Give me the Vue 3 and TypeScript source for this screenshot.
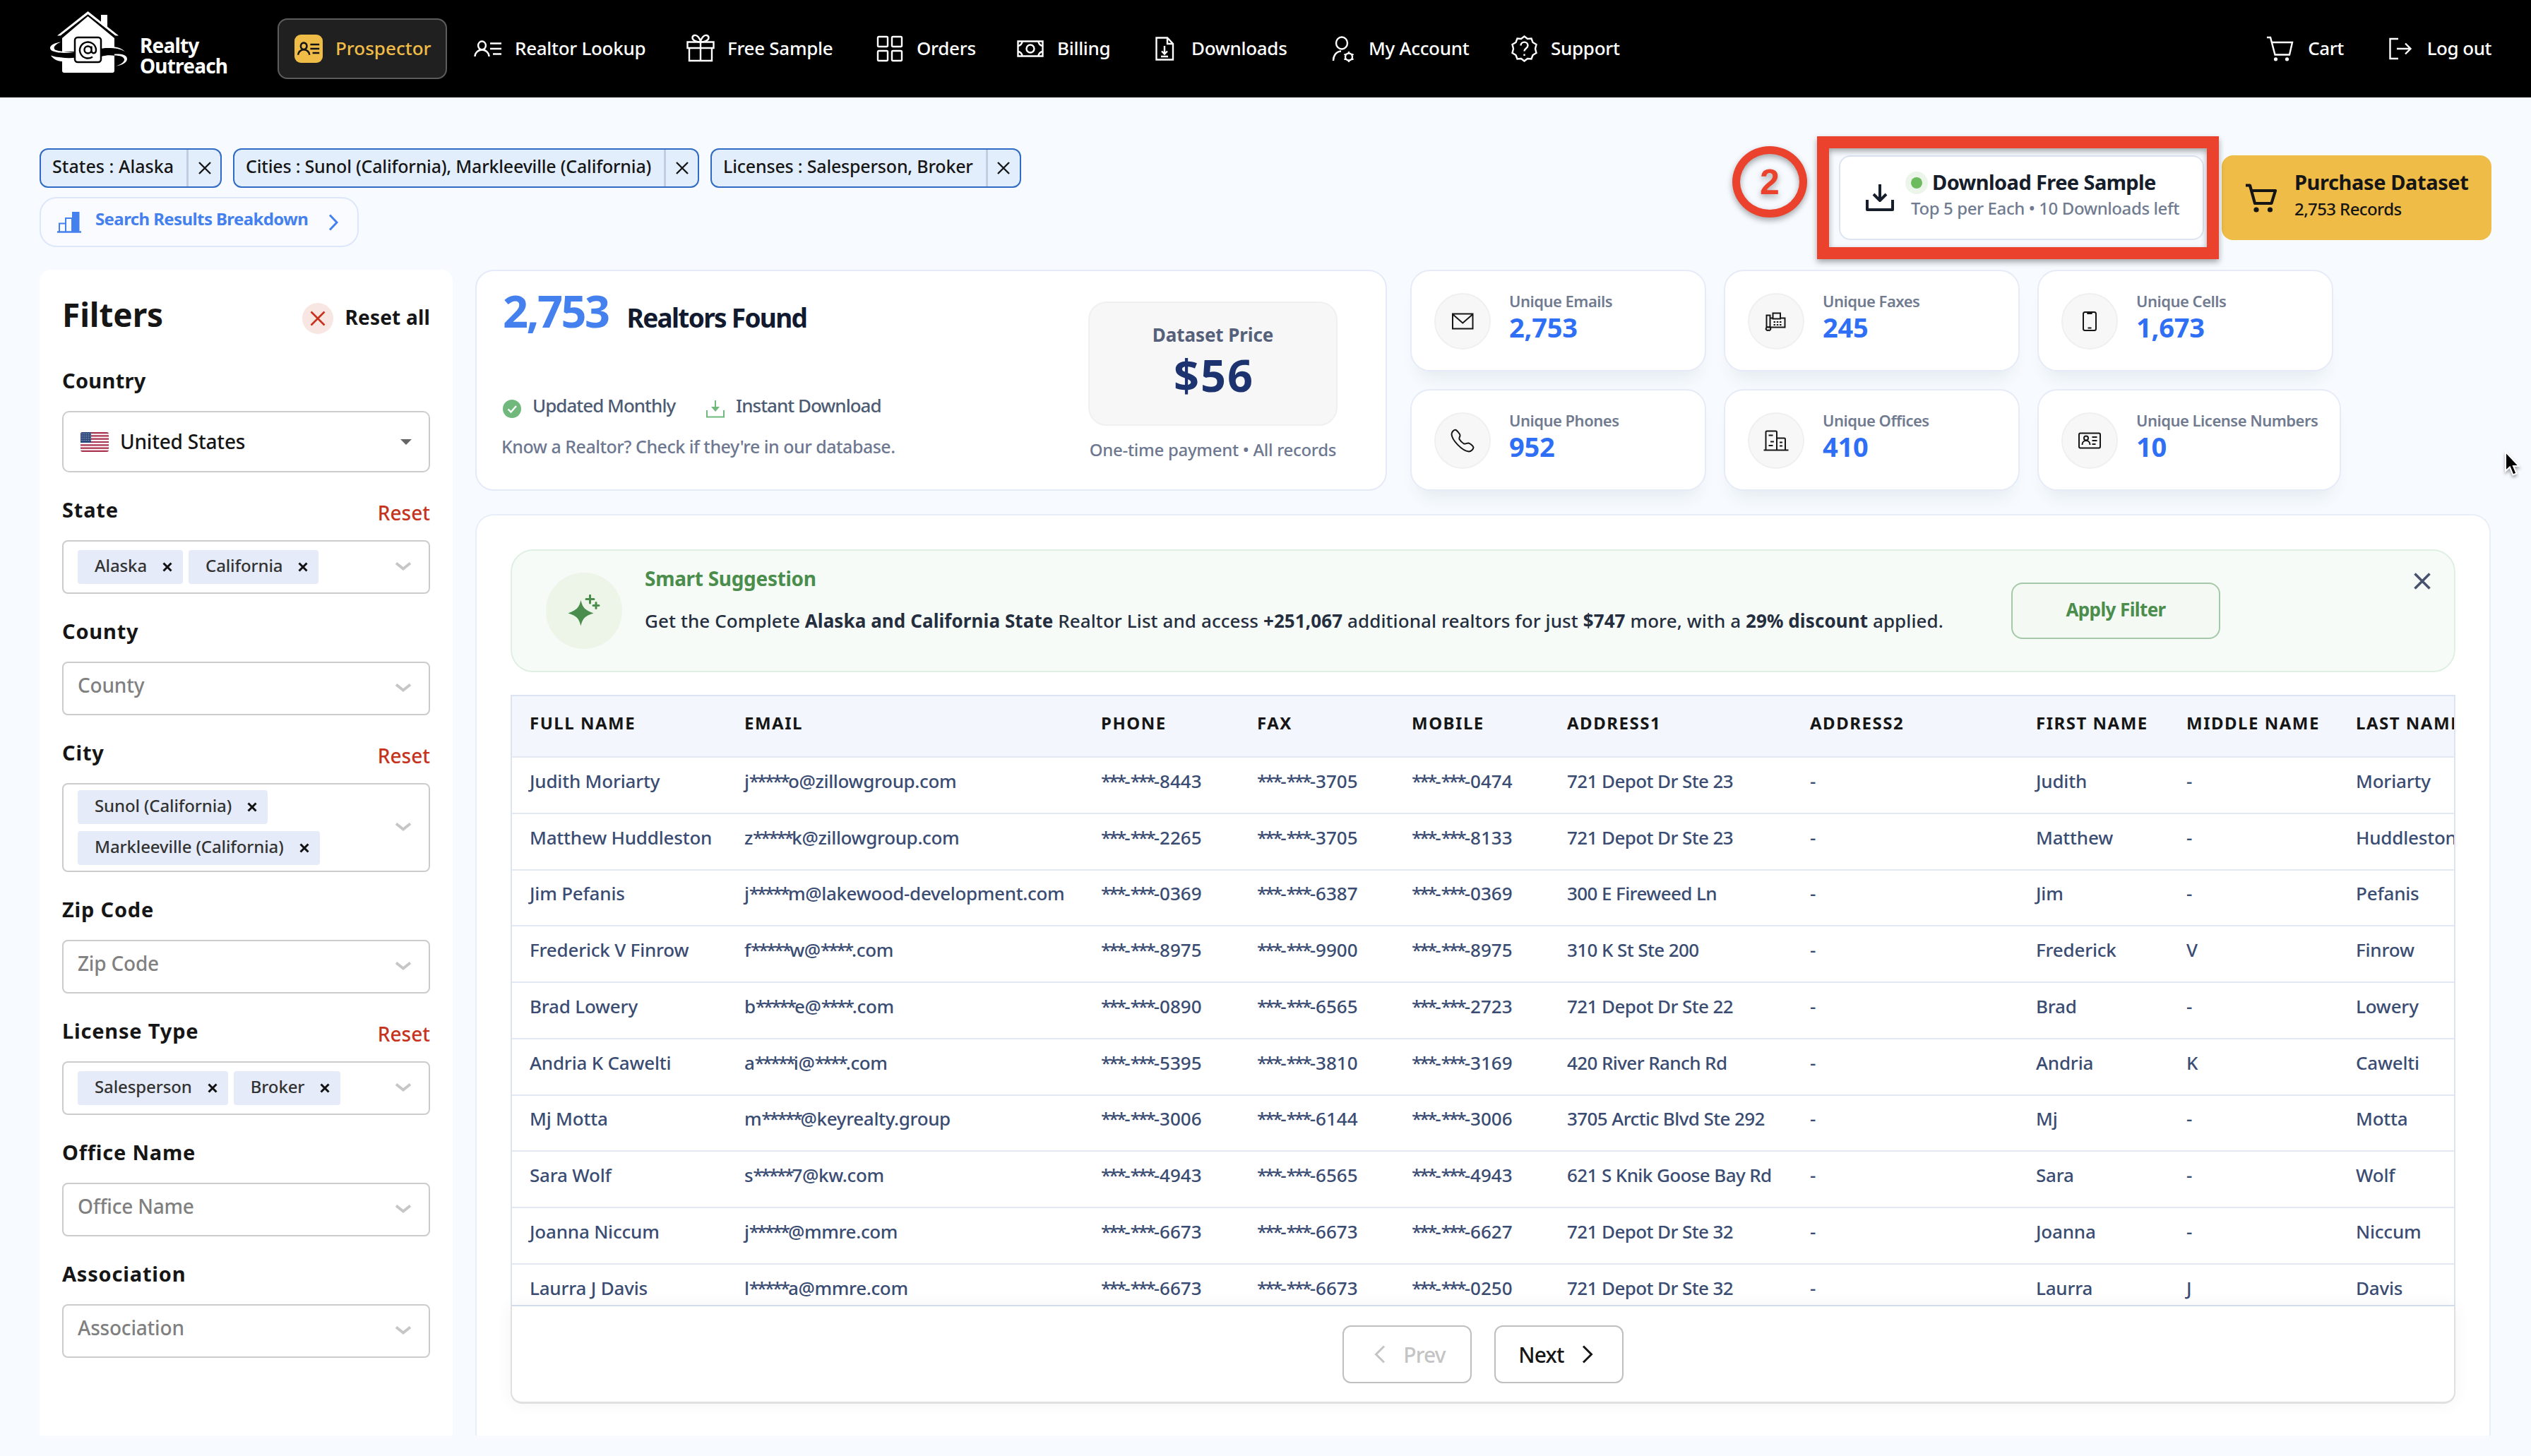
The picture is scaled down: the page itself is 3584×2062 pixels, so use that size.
<script setup lang="ts">
interface Stroke { d: string; fill?: boolean }
interface NavItem { label: string; icon: string; active?: boolean }
interface Filter { label: string; tags: string[]; reset?: boolean }
interface Stat { label: string; value: string; icon: string }

const icons: Record<string, Stroke[]> = {
  lookup: [
    { d: 'M11.5 9.5a5.3 5.8 0 1 1 0 11.8a5.3 5.8 0 1 1 0-11.8z' },
    { d: 'M1.5 31C1.5 26 6 21.5 11.5 21.5S21.500 26 21.500 31' },
    { d: 'M23 12.500h16M23 20h16M27 27.500h12' },
  ],
  gift: [
    { d: 'M1.500 10.500h37v8.500h-37zM4 19v18h32V19M20 10.500V37' },
    { d: 'M20 10.500C14 10.500 8.500 8 8.500 4.500C8.500 0 14 0 16.500 3C18.500 5.500 20 8 20 10.500C20 8 21.500 5.500 23.500 3C26 0 31.500 0 31.500 4.500C31.500 8 26 10.500 20 10.500z' },
  ],
  orders: [
    { d: 'M4.500 3h11a1.500 1.500 0 0 1 1.500 1.500v11a1.500 1.500 0 0 1-1.500 1.500h-11a1.500 1.500 0 0 1-1.500-1.500v-11a1.500 1.500 0 0 1 1.500-1.500zM24.500 3h11a1.500 1.500 0 0 1 1.500 1.500v11a1.500 1.500 0 0 1-1.500 1.500h-11a1.500 1.500 0 0 1-1.500-1.500v-11a1.500 1.500 0 0 1 1.500-1.500zM4.500 23h11a1.500 1.500 0 0 1 1.500 1.500v11a1.500 1.500 0 0 1-1.500 1.500h-11a1.500 1.500 0 0 1-1.500-1.500v-11a1.500 1.500 0 0 1 1.500-1.500zM24.500 23h11a1.500 1.500 0 0 1 1.500 1.500v11a1.500 1.500 0 0 1-1.500 1.500h-11a1.500 1.500 0 0 1-1.500-1.500v-11a1.500 1.500 0 0 1 1.500-1.500z' },
  ],
  billing: [
    { d: 'M2.500 9.500h35v21h-35z' },
    { d: 'M20 14.500a5.500 5.500 0 1 1 0 11a5.500 5.500 0 1 1 0-11zM2.500 16a6.500 6.500 0 0 0 6-6.500M37.500 16a6.500 6.500 0 0 1-6-6.500M2.500 24a6.500 6.500 0 0 1 6 6.500M37.500 24a6.500 6.500 0 0 0-6 6.500' },
  ],
  downloads: [
    { d: 'M8.500 4.500h15.500l8 8.500v22.500h-23.500zM24 4.500v8.500h8' },
    { d: 'M20 16v11M16 23.500l4 4 4-4M15 31h10' },
  ],
  account: [
    { d: 'M20 3.500a8 8.500 0 1 1 0 17a8 8.500 0 1 1 0-17z' },
    { d: 'M8 37c0-7 4-13 11-13.500' },
    { d: 'M30 26.500a5 5 0 1 1 0 10a5 5 0 1 1 0-10zM30 24v2.500M30 36.500v2.500M23.500 27.800l2.200 1.200M34.300 34l2.200 1.200M23.500 35.200l2.200-1.200M34.300 29l2.200-1.200' },
  ],
  support: [
    { d: 'M20.500 2.500l4.500 3.500 5.500-.5 2 5.500 5 3-1.500 6 1.500 6-5 3-2 5.500-5.500-.5-4.500 3.500-4.500-3.500-5.500.5-2-5.500-5-3 1.500-6-1.500-6 5-3 2-5.500 5.500.5z' },
    { d: 'M15.500 15.500c0-6.500 10-6.500 10 0c0 4-5 4-5 8M20.500 27.500v2.500' },
  ],
  cart: [
    { d: 'M0 4h5l6.500 24.500h20.500L36 11H7.500' },
    { d: 'M12.500 32.200a2.600 2.600 0 1 1 0 5.200a2.600 2.600 0 1 1 0-5.200zM28.500 32.200a2.600 2.600 0 1 1 0 5.200a2.600 2.600 0 1 1 0-5.200z', fill: true },
  ],
  logout: [
    { d: 'M17 6H5.500v28H17M15 20h19M27 12.500l7.500 7.500-7.500 7.500' },
  ],
  email: [{ d: 'M6 9.500h28.500v21h-28.500zM6 10L20.250 22.500L34.500 10' }],
  fax: [
    { d: 'M6.500 11.500h5v17h-5zM11.500 15.500h4M25 15.500h7.500v13h-21M15.500 8.500h10.500v8h-10.500zM9 28.500a2 2.500 0 1 1 0 4a2 2.500 0 1 1 0-4z' },
    { d: 'M16.500 20h2.500v2h-2.500zM20.800 20h2.500v2h-2.500zM25 20h2.500v2h-2.500zM16.500 24h2.500v2h-2.500zM20.800 24h2.500v2h-2.500zM25 24h2.500v2h-2.500z', fill: true },
  ],
  cell: [
    { d: 'M13.500 7h13a2.500 2.500 0 0 1 2.500 2.500v21a2.500 2.500 0 0 1-2.500 2.500h-13a2.500 2.500 0 0 1-2.500-2.500v-21a2.500 2.500 0 0 1 2.500-2.500zM17.500 29.500h5' },
    { d: 'M15.500 7h9l-1.200 3h-6.600z', fill: true },
  ],
  phone: [{ d: 'M6.500 6.500C8 5 10 4 11.500 5.500C13.500 7.500 17 11 16.500 13C16 15.500 14.800 16 15.500 18C17 20.500 19.500 23 22 24.500C24 25 26 23.300 28.500 23.500C31 24 35 27.500 35.500 29.500C35.500 32 32 35.500 29 35.500C19 34.500 5 19 4.500 11C4.500 9 5.500 7.500 6.500 6.500z' }],
  office: [
    { d: 'M2.500 33.500h35M5.500 33.500V8a1.500 1.500 0 0 1 1.500-1.500h12.500a1.500 1.500 0 0 1 1.500 1.500v25.500M21 16.500h10.500a1.500 1.500 0 0 1 1.500 1.500v15.500' },
    { d: 'M9.500 12.500h6M12 21.500h5M9.500 27h6M25 22.500h4M25 27.500h4' },
  ],
  license: [
    { d: 'M7 9.500h26a2 2 0 0 1 2 2v17a2 2 0 0 1-2 2h-26a2 2 0 0 1-2-2v-17a2 2 0 0 1 2-2z' },
    { d: 'M15 13.500a3 3 0 1 1 0 6a3 3 0 1 1 0-6zM9.500 26c0-8 11-8 11 0M23.500 15h7M23.500 20h7M23.500 25h5' },
  ],
}

const nav: NavItem[] = [
  { label: 'Prospector', icon: 'lookup', active: true },
  { label: 'Realtor Lookup', icon: 'lookup' },
  { label: 'Free Sample', icon: 'gift' },
  { label: 'Orders', icon: 'orders' },
  { label: 'Billing', icon: 'billing' },
  { label: 'Downloads', icon: 'downloads' },
  { label: 'My Account', icon: 'account' },
  { label: 'Support', icon: 'support' },
]

const chips = ['States : Alaska', 'Cities : Sunol (California), Markleeville (California)', 'Licenses : Salesperson, Broker']

const filters: Filter[] = [
  { label: 'State', tags: ['Alaska', 'California'], reset: true },
  { label: 'County', tags: [] },
  { label: 'City', tags: ['Sunol (California)', 'Markleeville (California)'], reset: true },
  { label: 'Zip Code', tags: [] },
  { label: 'License Type', tags: ['Salesperson', 'Broker'], reset: true },
  { label: 'Office Name', tags: [] },
  { label: 'Association', tags: [] },
]

const stats: Stat[] = [
  { label: 'Unique Emails', value: '2,753', icon: 'email' },
  { label: 'Unique Faxes', value: '245', icon: 'fax' },
  { label: 'Unique Cells', value: '1,673', icon: 'cell' },
  { label: 'Unique Phones', value: '952', icon: 'phone' },
  { label: 'Unique Offices', value: '410', icon: 'office' },
  { label: 'Unique License Numbers', value: '10', icon: 'license' },
]

const columns = ['Full Name', 'Email', 'Phone', 'Fax', 'Mobile', 'Address1', 'Address2', 'First Name', 'Middle Name', 'Last Name']

const rows: string[][] = [
  ['Judith Moriarty', 'j*****o@zillowgroup.com', '***-***-8443', '***-***-3705', '***-***-0474', '721 Depot Dr Ste 23', '-', 'Judith', '-', 'Moriarty'],
  ['Matthew Huddleston', 'z*****k@zillowgroup.com', '***-***-2265', '***-***-3705', '***-***-8133', '721 Depot Dr Ste 23', '-', 'Matthew', '-', 'Huddleston'],
  ['Jim Pefanis', 'j*****m@lakewood-development.com', '***-***-0369', '***-***-6387', '***-***-0369', '300 E Fireweed Ln', '-', 'Jim', '-', 'Pefanis'],
  ['Frederick V Finrow', 'f*****w@****.com', '***-***-8975', '***-***-9900', '***-***-8975', '310 K St Ste 200', '-', 'Frederick', 'V', 'Finrow'],
  ['Brad Lowery', 'b*****e@****.com', '***-***-0890', '***-***-6565', '***-***-2723', '721 Depot Dr Ste 22', '-', 'Brad', '-', 'Lowery'],
  ['Andria K Cawelti', 'a*****i@****.com', '***-***-5395', '***-***-3810', '***-***-3169', '420 River Ranch Rd', '-', 'Andria', 'K', 'Cawelti'],
  ['Mj Motta', 'm*****@keyrealty.group', '***-***-3006', '***-***-6144', '***-***-3006', '3705 Arctic Blvd Ste 292', '-', 'Mj', '-', 'Motta'],
  ['Sara Wolf', 's*****7@kw.com', '***-***-4943', '***-***-6565', '***-***-4943', '621 S Knik Goose Bay Rd', '-', 'Sara', '-', 'Wolf'],
  ['Joanna Niccum', 'j*****@mmre.com', '***-***-6673', '***-***-6673', '***-***-6627', '721 Depot Dr Ste 32', '-', 'Joanna', '-', 'Niccum'],
  ['Laurra J Davis', 'l*****a@mmre.com', '***-***-6673', '***-***-6673', '***-***-0250', '721 Depot Dr Ste 32', '-', 'Laurra', 'J', 'Davis'],
]

// Splits a cell into plain runs and masked (asterisk) runs, which are set tighter.
const runs = (cell: string): string[] => cell.split(/(\*+)/).filter(Boolean)
</script>

<template>
  <div class="page">
    <header class="header">
      <div class="brand">
        <svg class="brand-mark" viewBox="0 0 110 88" width="110" height="88">
          <path d="M17 38L53.500 7L91 38V84a3 3 0 0 1-3 3H20a3 3 0 0 1-3-3z" fill="#fff" />
          <path d="M72 5h9v20l-9-8z" fill="#fff" />
          <path d="M10 34.500L53.500 0L97 34.500h-5L53.500 5L15 34.500z" fill="#fff" />
          <path d="M15 35.500L53.500 5.500L92 35.500" fill="none" stroke="#000" stroke-width="2" />
          <path d="M72 52.500C84 51 96 51 107 57L99 65H92V63C86 62 80 62 72 64z" fill="#000" />
          <path d="M16 57h20v8.500C26 67 14 66 2 62z" fill="#000" />
          <path d="M15 43.500C2 45 -5 52 4 56.500C10 59 22 59.500 35 58.500C24 57.500 12 57 7 54.500C3 51 8 46.500 15 43.500z" fill="#fff" />
          <path d="M1 62.500c3 5 9 8 16 8.500v-5.500C10 65 5 64 1 62.500z" fill="#fff" />
          <path d="M73 51.500c13-2.500 26-2 33 5.500c-9-5-20-5.500-33-4.500z" fill="#fff" />
          <path d="M91 62.500c8 0 14 2 14 6c0 3.500-5 7-12 9c9-1 16-5 16-10c0-6-8-7.500-18-7z" fill="#fff" />
          <rect x="35" y="37" width="37" height="35" rx="4" fill="#fff" stroke="#000" stroke-width="2.500" />
          <path d="M60 64.500a11.500 11.500 0 1 1 5-10c0 6.500-6.500 6-6.500 1v-6M58.500 54.500a5 5 0 1 1-10 0a5 5 0 1 1 10 0z" fill="none" stroke="#000" stroke-width="2.400" />
        </svg>
        <div class="brand-name"><span>Realty</span><span>Outreach</span></div>
      </div>
      <nav class="nav">
        <a v-for="item in nav" :key="item.label" class="nav-item" :class="{ active: item.active }">
          <span class="nav-icon">
            <svg viewBox="0 0 40 40"><path v-for="(s, i) in icons[item.icon]" :key="i" :d="s.d" :class="{ solid: s.fill }" /></svg>
          </span>
          <span class="nav-label">{{ item.label }}</span>
        </a>
      </nav>
      <div class="account">
        <a class="nav-item"><span class="nav-icon"><svg viewBox="0 0 40 40"><path v-for="(s, i) in icons.cart" :key="i" :d="s.d" :class="{ solid: s.fill }" /></svg></span><span class="nav-label">Cart</span></a>
        <a class="nav-item"><span class="nav-icon"><svg viewBox="0 0 40 40"><path v-for="(s, i) in icons.logout" :key="i" :d="s.d" /></svg></span><span class="nav-label">Log out</span></a>
      </div>
    </header>

    <section class="top">
      <div class="summary">
        <div class="chips">
          <div v-for="chip in chips" :key="chip" class="chip">
            <span class="chip-text">{{ chip }}</span>
            <span class="chip-x"><svg viewBox="0 0 20 20" width="20" height="20"><path d="M2 2l16 16M18 2L2 18" /></svg></span>
          </div>
        </div>
        <a class="breakdown">
          <svg viewBox="0 0 34 30" width="34" height="30">
            <path d="M0 28.500h34" stroke="#4480ee" stroke-width="2.500" />
            <path d="M3 28V16.500h9V28M12 28V9h9V28" fill="none" stroke="#4480ee" stroke-width="2" />
            <path d="M21 28V0h10.500v28z" fill="#4480ee" />
          </svg>
          <span>Search Results Breakdown</span>
          <svg class="go" viewBox="0 0 14 24" width="14" height="24"><path d="M2 1.500L12 12L2 22.500" fill="none" stroke="#4480ee" stroke-width="3" /></svg>
        </a>
      </div>
      <div class="actions">
        <button class="btn sample">
          <svg viewBox="0 0 40 40" width="40" height="40"><path d="M20 1v22M11 15l9 9 9-9M2 23v14h36V23" fill="none" stroke="#161d2b" stroke-width="4" stroke-linejoin="round" /></svg>
          <span class="btn-body">
            <span class="btn-title"><i class="dot"></i><span>Download Free Sample</span></span>
            <span class="btn-sub">Top 5 per Each • 10 Downloads left</span>
          </span>
        </button>
        <button class="btn purchase">
          <svg viewBox="0 0 44 42" width="44" height="42"><path d="M0 2.500h6L13 28h23.500L42 10H8.500" fill="none" stroke="#151515" stroke-width="4.200" stroke-linejoin="round" /><circle cx="15" cy="37" r="3.600" fill="#151515" /><circle cx="34.500" cy="37" r="3.600" fill="#151515" /></svg>
          <span class="btn-body">
            <span class="btn-title">Purchase Dataset</span>
            <span class="btn-sub">2,753 Records</span>
          </span>
        </button>
      </div>
    </section>

    <div class="body">
      <aside class="sidebar">
        <div class="side-head">
          <h2>Filters</h2>
          <a class="reset-all">
            <span class="reset-dot"><svg viewBox="0 0 22 22" width="22" height="22"><path d="M1.500 1.500l19 19M20.500 1.500l-19 19" stroke="#c5331d" stroke-width="2.600" /></svg></span>
            <span class="reset-label">Reset all</span>
          </a>
        </div>
        <div class="field">
          <div class="field-head country-head"><label>Country</label></div>
          <div class="select country">
            <svg class="flag" viewBox="0 0 40 28" width="40" height="28">
              <clipPath id="flagClip"><rect width="40" height="28" rx="3" /></clipPath>
              <g clip-path="url(#flagClip)">
                <rect width="40" height="28" fill="#fff" />
                <path d="M0 1.100h40M0 5.400h40M0 9.700h40M0 14h40M0 18.300h40M0 22.600h40M0 26.900h40" stroke="#a9324e" stroke-width="2.200" />
                <rect width="15" height="15" fill="#2f4a7c" />
                <path d="M1.500 2.500h13M1.500 5.500h13M1.500 8.500h13M1.500 11.500h13" stroke="#b9c6dc" stroke-width="1" stroke-dasharray="1.200 1.800" />
              </g>
            </svg>
            <span class="country-name">United States</span>
            <svg class="caret" viewBox="0 0 16 8" width="16" height="8"><path d="M0 0h16L8 8z" fill="#666" /></svg>
          </div>
        </div>
        <div v-for="f in filters" :key="f.label" class="field">
          <div class="field-head"><label>{{ f.label }}</label><a v-if="f.reset" class="reset">Reset</a></div>
          <div class="select">
            <div v-if="f.tags.length" class="tags">
              <span v-for="t in f.tags" :key="t" class="tag"><span>{{ t }}</span><svg viewBox="0 0 14 14" width="14" height="14"><path d="M1.500 1.500l11 11M12.500 1.500l-11 11" stroke="#111" stroke-width="3" /></svg></span>
            </div>
            <span v-else class="placeholder">{{ f.label }}</span>
            <svg class="chev" viewBox="0 0 24 14" width="24" height="14"><path d="M2 2.500L12 10.500L22 2.500" /></svg>
          </div>
        </div>
      </aside>

      <main class="main">
        <div class="metrics">
          <div class="found">
            <div class="found-left">
              <div class="found-head"><strong>2,753</strong><span>Realtors Found</span></div>
              <div class="perks">
                <svg viewBox="0 0 26 26" width="26" height="26"><circle cx="13" cy="13" r="13" fill="#70b87c" /><path d="M7.500 13.500l4 4 7.500-8.500" fill="none" stroke="#fff" stroke-width="2.400" /></svg>
                <span class="perk-a">Updated Monthly</span>
                <svg viewBox="0 0 26 26" width="26" height="26"><path d="M13 1v12M1 15v9.500h24V15" fill="none" stroke="#70b87c" stroke-width="2" /><path d="M7 10h12l-6 7z" fill="#70b87c" /></svg>
                <span>Instant Download</span>
              </div>
              <p class="know">Know a Realtor? Check if they're in our database.</p>
            </div>
            <div class="price">
              <div class="price-box"><span>Dataset Price</span><strong>$56</strong></div>
              <p>One-time payment • All records</p>
            </div>
          </div>
          <div class="stats">
            <div v-for="s in stats" :key="s.label" class="stat">
              <span class="stat-icon"><svg viewBox="0 0 40 40" width="40" height="40"><path v-for="(p, i) in icons[s.icon]" :key="i" :d="p.d" :class="{ solid: p.fill }" /></svg></span>
              <div class="stat-text"><span>{{ s.label }}</span><strong>{{ s.value }}</strong></div>
            </div>
          </div>
        </div>

        <section class="panel">
          <div class="suggest">
            <span class="suggest-icon">
              <svg viewBox="0 0 46 46" width="46" height="46"><path d="M18.500 8c2.500 10 5 13.500 18 18.500c-13 4-15.500 8-18 18c-2.500-10-5-14-18-18c13-5 15.500-8.500 18-18.500z" fill="#4a8d4c" /><path d="M31.500 1v11M26 6.500h11M40 11.500v8M36 15.500h8" stroke="#4a8d4c" stroke-width="3" stroke-linecap="round" /></svg>
            </span>
            <div class="suggest-text">
              <h3>Smart Suggestion</h3>
              <p>Get the Complete <b>Alaska and California State</b> Realtor List and access <b>+251,067</b> additional realtors for just <b>$747</b> more, with a <b>29% discount</b> applied.</p>
            </div>
            <button class="apply">Apply Filter</button>
            <svg class="close" viewBox="0 0 24 24" width="24" height="24"><path d="M1.500 1.500l21 21M22.500 1.500l-21 21" stroke="#48526e" stroke-width="3.600" /></svg>
          </div>

          <div class="table">
            <div class="tr th"><span v-for="c in columns" :key="c" class="cell">{{ c }}</span></div>
            <div v-for="r in rows" :key="r[0]" class="tr td">
              <span v-for="(c, i) in r" :key="i" class="cell"><span v-for="(t, j) in runs(c)" :key="j" :class="{ mask: t[0] === '*' }">{{ t }}</span></span>
            </div>
          </div>
          <div class="pager">
            <button class="page-btn off"><svg viewBox="0 0 16 26" width="16" height="26"><path d="M14 1.500L2.500 13L14 24.500" /></svg><span>Prev</span></button>
            <button class="page-btn next"><span>Next</span><svg viewBox="0 0 16 26" width="16" height="26"><path d="M2 1.500L13.500 13L2 24.500" /></svg></button>
          </div>
        </section>
      </main>
    </div>

    <div class="step">2</div>
    <div class="highlight"></div>
    <svg class="cursor" viewBox="0 0 24 38" width="24" height="38"><path d="M3 2v27l6-5.500 4.500 11 5-2-4.500-10.500h8z" fill="#000" stroke="#fff" stroke-width="2" /></svg>
  </div>
</template>

<style>
body { background: #f7fbff; }
</style>

<style scoped>
* { box-sizing: border-box; }
.page {
  position: relative; width: 3584px; height: 2062px; overflow: hidden;
  background: #f7fbff; color: #161616;
  font-family: "Noto Sans", "Open Sans", sans-serif; font-size: 26px; font-weight: 500;
}
h2, h3, p { margin: 0; }
button { font-family: inherit; font-weight: 500; padding: 0; }
svg { flex: none; display: block; }

.header { display: flex; height: 138px; background: #000; color: #fff; padding-left: 71px; }
.brand { display: flex; width: 322px; padding-top: 16px; }
.brand-name { display: flex; flex-direction: column; margin: 34px 0 0 17px; font-weight: 700; font-size: 28px; line-height: 29px; letter-spacing: -.8px; }
.nav { display: grid; grid-template-columns: 278px 301px 268px 199px 190px 251px 258px 200px; align-items: center; }
.nav-item { display: flex; align-items: center; gap: 18px; white-space: nowrap; line-height: 40px; letter-spacing: -.3px; }
.nav-label { margin-top: -2px; }
.nav-icon { width: 40px; height: 40px; flex: none; display: flex; align-items: center; justify-content: center; }
.nav-icon svg { width: 40px; height: 40px; overflow: visible; }
.nav-icon path { fill: none; stroke: #fff; stroke-width: 2.4; }
.nav-icon path.solid { fill: #fff; stroke: none; }
.nav-item.active { width: 240px; height: 86px; padding-left: 22px; border: 2px solid #5c5c5c; border-radius: 14px; background: #202020; color: #f0bc48; letter-spacing: 0; }
.active .nav-icon { background: #f0bc48; border-radius: 9px; }
.active .nav-icon svg { width: 32px; height: 32px; }
.active .nav-icon path { stroke: #151515; stroke-width: 3.2; }
.account { display: flex; gap: 60px; align-items: center; margin-left: auto; padding-right: 56px; }
.account .nav-item { letter-spacing: -.5px; }

.top { display: flex; height: 244px; padding: 0 56px; flex: none; }
.summary { padding-top: 72px; }
.chips { display: flex; gap: 16px; }
.chip { display: flex; height: 56px; border: 2px solid #2f6bc4; border-radius: 12px; background: #e3eefd; font-size: 25px; line-height: 47px; white-space: nowrap; letter-spacing: -.2px; }
.chip:first-child { letter-spacing: .05px; }
.chip-text { padding: 0 18px 0 16px; border-right: 3px solid #c3cde2; }
.chip-x { width: 45px; display: flex; align-items: center; justify-content: center; }
.chip-x path { stroke: #161616; stroke-width: 2.4; }
.breakdown { display: inline-flex; align-items: center; margin-top: 13px; width: 452px; height: 71px; padding-left: 23px; border: 2px solid #dde6fb; border-radius: 24px; background: #f9fbff; color: #4480ee; font-weight: 700; font-size: 24px; line-height: 40px; letter-spacing: -.6px; }
.breakdown span { margin: -9px 0 0 20px; width: 330px; white-space: nowrap; }
.actions { display: flex; gap: 25px; margin: 82px 0 0 auto; }
.btn { display: flex; height: 120px; border-radius: 16px; text-align: left; color: #161616; white-space: nowrap; }
.btn-body { display: flex; flex-direction: column; }
.btn-title { display: flex; align-items: center; font-size: 29px; font-weight: 700; line-height: 40px; letter-spacing: -.6px; }
.btn-title > span { margin-top: -2px; }
.btn-sub { font-size: 24px; line-height: 32px; letter-spacing: -.4px; }
.sample { width: 517px; border: 2px solid #dde5f2; background: #fff; padding: 38px 0 0 36px; }
.sample .btn-body { margin: -20px 0 0 24px; }
.sample .btn-title { color: #161d2b; }
.sample .btn-sub { color: #717b90; margin-top: 1px; }
.dot { width: 16px; height: 16px; margin-right: 14px; border-radius: 50%; background: #6cbb5f; box-shadow: 0 0 0 8px #ebf5ea; }
.purchase { width: 382px; border: 0; background: #f0bc48; padding: 40px 0 0 34px; }
.purchase .btn-body { margin: -22px 0 0 25px; }
.purchase .btn-title { letter-spacing: -.4px; }
.purchase .btn-sub { margin-top: 2px; letter-spacing: -.6px; }

.body { display: flex; gap: 32px; padding: 0 56px; }
.sidebar { width: 585px; height: 1651px; padding: 0 32px; background: #fff; border-radius: 16px 16px 0 0; flex: none; }
.side-head { display: flex; justify-content: space-between; align-items: center; height: 126px; padding-top: 8px; }
h2 { font-size: 46px; font-weight: 700; line-height: 60px; margin-top: -9px; letter-spacing: -.1px; }
.reset-all { display: flex; align-items: center; gap: 16px; font-size: 28px; font-weight: 700; line-height: 44px; margin-top: 4px; }
.reset-label { margin-top: -5px; letter-spacing: .2px; }
.reset-dot { width: 44px; height: 44px; border-radius: 50%; background: #f8e6e3; display: flex; align-items: center; justify-content: center; }
.field-head { display: flex; justify-content: space-between; height: 96px; padding-top: 23px; line-height: 60px; }
.field-head.country-head { height: 74px; padding-top: 1px; }
.field-head label { font-size: 29px; font-weight: 700; letter-spacing: .8px; }
.field-head.country-head label { letter-spacing: .3px; }
.reset { color: #c5331d; font-size: 28px; padding-top: 4px; font-weight: 500; }
.select { position: relative; display: flex; align-items: center; min-height: 76px; border: 2px solid #ccc; border-radius: 8px; }
.select.country { height: 87px; border-radius: 10px; padding-left: 24px; font-size: 28px; letter-spacing: -.2px; }
.country-name { margin-top: -2px; }
.flag { margin-right: 16px; }
.caret { margin: 0 24px 0 auto; }
.chev { margin: -2px 24px 0 auto; }
.chev path { fill: none; stroke: #c6c6c6; stroke-width: 4; }
.placeholder { font-size: 28px; color: #808080; padding-left: 20px; line-height: 40px; margin-top: -11px; letter-spacing: -.2px; }
.tags { display: flex; flex-wrap: wrap; gap: 10px 8px; padding: 8px 0 8px 20px; width: 440px; }
.tag { display: flex; align-items: center; height: 48px; padding: 0 15px 0 24px; gap: 22px; border-radius: 4px; background: #e5ebf9; color: #333; font-size: 24px; line-height: 40px; white-space: nowrap; letter-spacing: -.12px; }
.tag span { margin-top: -5px; }

.main { width: 2854px; flex: none; }
.metrics { display: flex; height: 313px; gap: 33px; }
.found { display: flex; justify-content: space-between; width: 1291px; height: 313px; border: 2px solid #e4eaf8; border-radius: 26px; background: #fff; padding: 0 68px 0 37px; flex: none; }
.found-head { display: flex; align-items: baseline; gap: 26px; height: 160px; padding-top: 12px; line-height: 88px; white-space: nowrap; }
.found-head strong { font-size: 63px; color: #4480ee; letter-spacing: -2.5px; }
.found-head span { font-size: 37px; font-weight: 700; color: #111a2e; letter-spacing: -1.7px; }
.perks { display: flex; align-items: center; height: 48px; color: #4d5b73; font-size: 26px; white-space: nowrap; margin-top: 9px; letter-spacing: -1px; }
.perks svg { margin-top: 4px; }
.perks span { margin: -6px 0 0 16px; }
.perks .perk-a { width: 246px; }
.know { font-size: 25px; color: #6d7890; line-height: 40px; margin: 11px 0 0 -2px; letter-spacing: -.5px; }
.price { display: flex; flex-direction: column; align-items: center; width: 353px; padding-top: 43px; }
.price-box { display: flex; flex-direction: column; align-items: center; width: 353px; height: 176px; padding-top: 21px; border: 2px solid #f0f0f0; border-radius: 26px; background: #f7f7f7; flex: none; }
.price-box span { font-size: 26px; font-weight: 700; color: #55607a; line-height: 48px; letter-spacing: -.1px; }
.price-box strong { font-size: 63px; color: #1d3370; line-height: 72px; letter-spacing: 2px; margin: -3px 0 0 3px; }
.price p { font-size: 24px; color: #6d7890; line-height: 40px; margin-top: 14px; white-space: nowrap; letter-spacing: -.3px; }
.stats { display: grid; grid-template-columns: 419px 419px max-content; grid-template-rows: 144px 144px; gap: 25px; }
.stat { display: flex; min-width: 419px; width: max-content; height: 144px; padding: 31px 31px 0 32px; border: 2px solid #e6ebf7; border-radius: 28px; background: #fff; box-shadow: 0 20px 24px -12px rgba(30, 50, 80, .09); }
.stat-icon { display: flex; align-items: center; justify-content: center; width: 80px; height: 80px; border: 2px solid #f0f0f0; border-radius: 50%; background: #f7f7f7; flex: none; }
.stat-icon path { fill: none; stroke: #161616; stroke-width: 2; }
.stat-icon path.solid { fill: #161616; stroke: none; }
.stat-text { display: flex; flex-direction: column; margin-left: 26px; white-space: nowrap; }
.stat-text span { font-size: 22px; font-weight: 600; color: #717b90; line-height: 30px; margin-top: -4px; letter-spacing: -.5px; }
.stat-text strong { font-size: 38px; color: #2f6ff5; line-height: 46px; margin-top: -1px; letter-spacing: -.2px; }

.panel { height: 1305px; margin-top: 33px; padding: 48px 48px 0; background: #fff; border: 2px solid #e8eef8; border-bottom: 0; border-radius: 26px 26px 0 0; }
.suggest { position: relative; display: flex; align-items: center; width: 2754px; height: 174px; padding-left: 48px; border: 2px solid #e0efe4; border-radius: 32px; background: #f6fbf7; }
.suggest-icon { display: flex; align-items: center; justify-content: center; width: 108px; height: 108px; border-radius: 50%; background: #edf4e8; flex: none; }
.suggest-text { width: 1967px; flex: none; padding-left: 32px; margin-top: -30px; white-space: nowrap; }
h3 { font-size: 28px; font-weight: 700; color: #4a8d4c; line-height: 40px; letter-spacing: -.3px; }
.suggest-text p { font-size: 26px; color: #252e3e; line-height: 44px; margin-top: 18px; letter-spacing: .09px; }
.apply { width: 296px; height: 80px; padding-bottom: 4px; border: 2px solid #a3c9a8; border-radius: 16px; background: #f4f9f3; color: #4a8d4c; font-size: 26px; font-weight: 700; letter-spacing: -.6px; }
.close { position: absolute; right: 33px; top: 31px; }
.table { width: 2754px; height: 864px; margin-top: 32px; border: 2px solid #dbe4f0; border-bottom: 0; overflow: hidden; }
.tr { display: grid; grid-template-columns: 304px 505px 221px 219px 220px 344px 320px 213px 240px 260px; width: 2871px; height: 79.750px; padding-left: 25px; border-bottom: 2px solid #e2e8f4; align-items: center; font-size: 26px; color: #3a4c72; white-space: nowrap; line-height: 66px; }
.tr.th { height: 87px; background: #f3f6fc; font-size: 24px; font-weight: 700; color: #161616; text-transform: uppercase; letter-spacing: 1.5px; }
.th .cell { margin-top: -9px; }
.td .cell { margin-top: -12px; letter-spacing: -.2px; }
.td .cell:nth-child(2) { letter-spacing: -.35px; }
.td .cell:nth-child(3), .td .cell:nth-child(4), .td .cell:nth-child(5) { letter-spacing: 0; }
.td .cell:nth-child(6) { letter-spacing: -.6px; }
.td .mask { letter-spacing: -3.2px; }
.pager { display: flex; justify-content: center; gap: 32px; width: 2754px; height: 140px; padding-top: 27px; border: 2px solid #e0e0e0; border-top-color: #d3dceb; border-bottom-width: 3px; border-radius: 0 0 16px 16px; background: #fff; box-shadow: 0 0 24px rgba(0, 0, 0, .05); position: relative; }
.page-btn { display: flex; align-items: center; justify-content: center; gap: 25px; width: 183px; height: 82px; border: 2px solid #bfbfbf; border-radius: 12px; background: #fff; font-size: 30px; color: #161616; letter-spacing: -.8px; }
.page-btn path { fill: none; stroke: #161616; stroke-width: 3; }
.page-btn.off { color: #c4c4c4; padding-left: 8px; }
.page-btn.next { padding-right: 9px; }
.page-btn.off path { stroke: #c4c4c4; }

.step { position: absolute; left: 2453px; top: 207px; width: 106px; height: 101px; border: 11px solid #ea422c; border-radius: 50%; color: #ea422c; font: 700 50px/80px "Liberation Sans", Arial, sans-serif; text-align: center; filter: drop-shadow(0 4px 4px rgba(0, 0, 0, .35)); }
.highlight { position: absolute; left: 2573px; top: 193px; width: 569px; height: 174px; border: 17px solid #ea422c; filter: drop-shadow(0 4px 4px rgba(0, 0, 0, .35)); }
.cursor { position: absolute; left: 3545px; top: 638px; filter: drop-shadow(0 3px 2px rgba(0, 0, 0, .35)); }
</style>
